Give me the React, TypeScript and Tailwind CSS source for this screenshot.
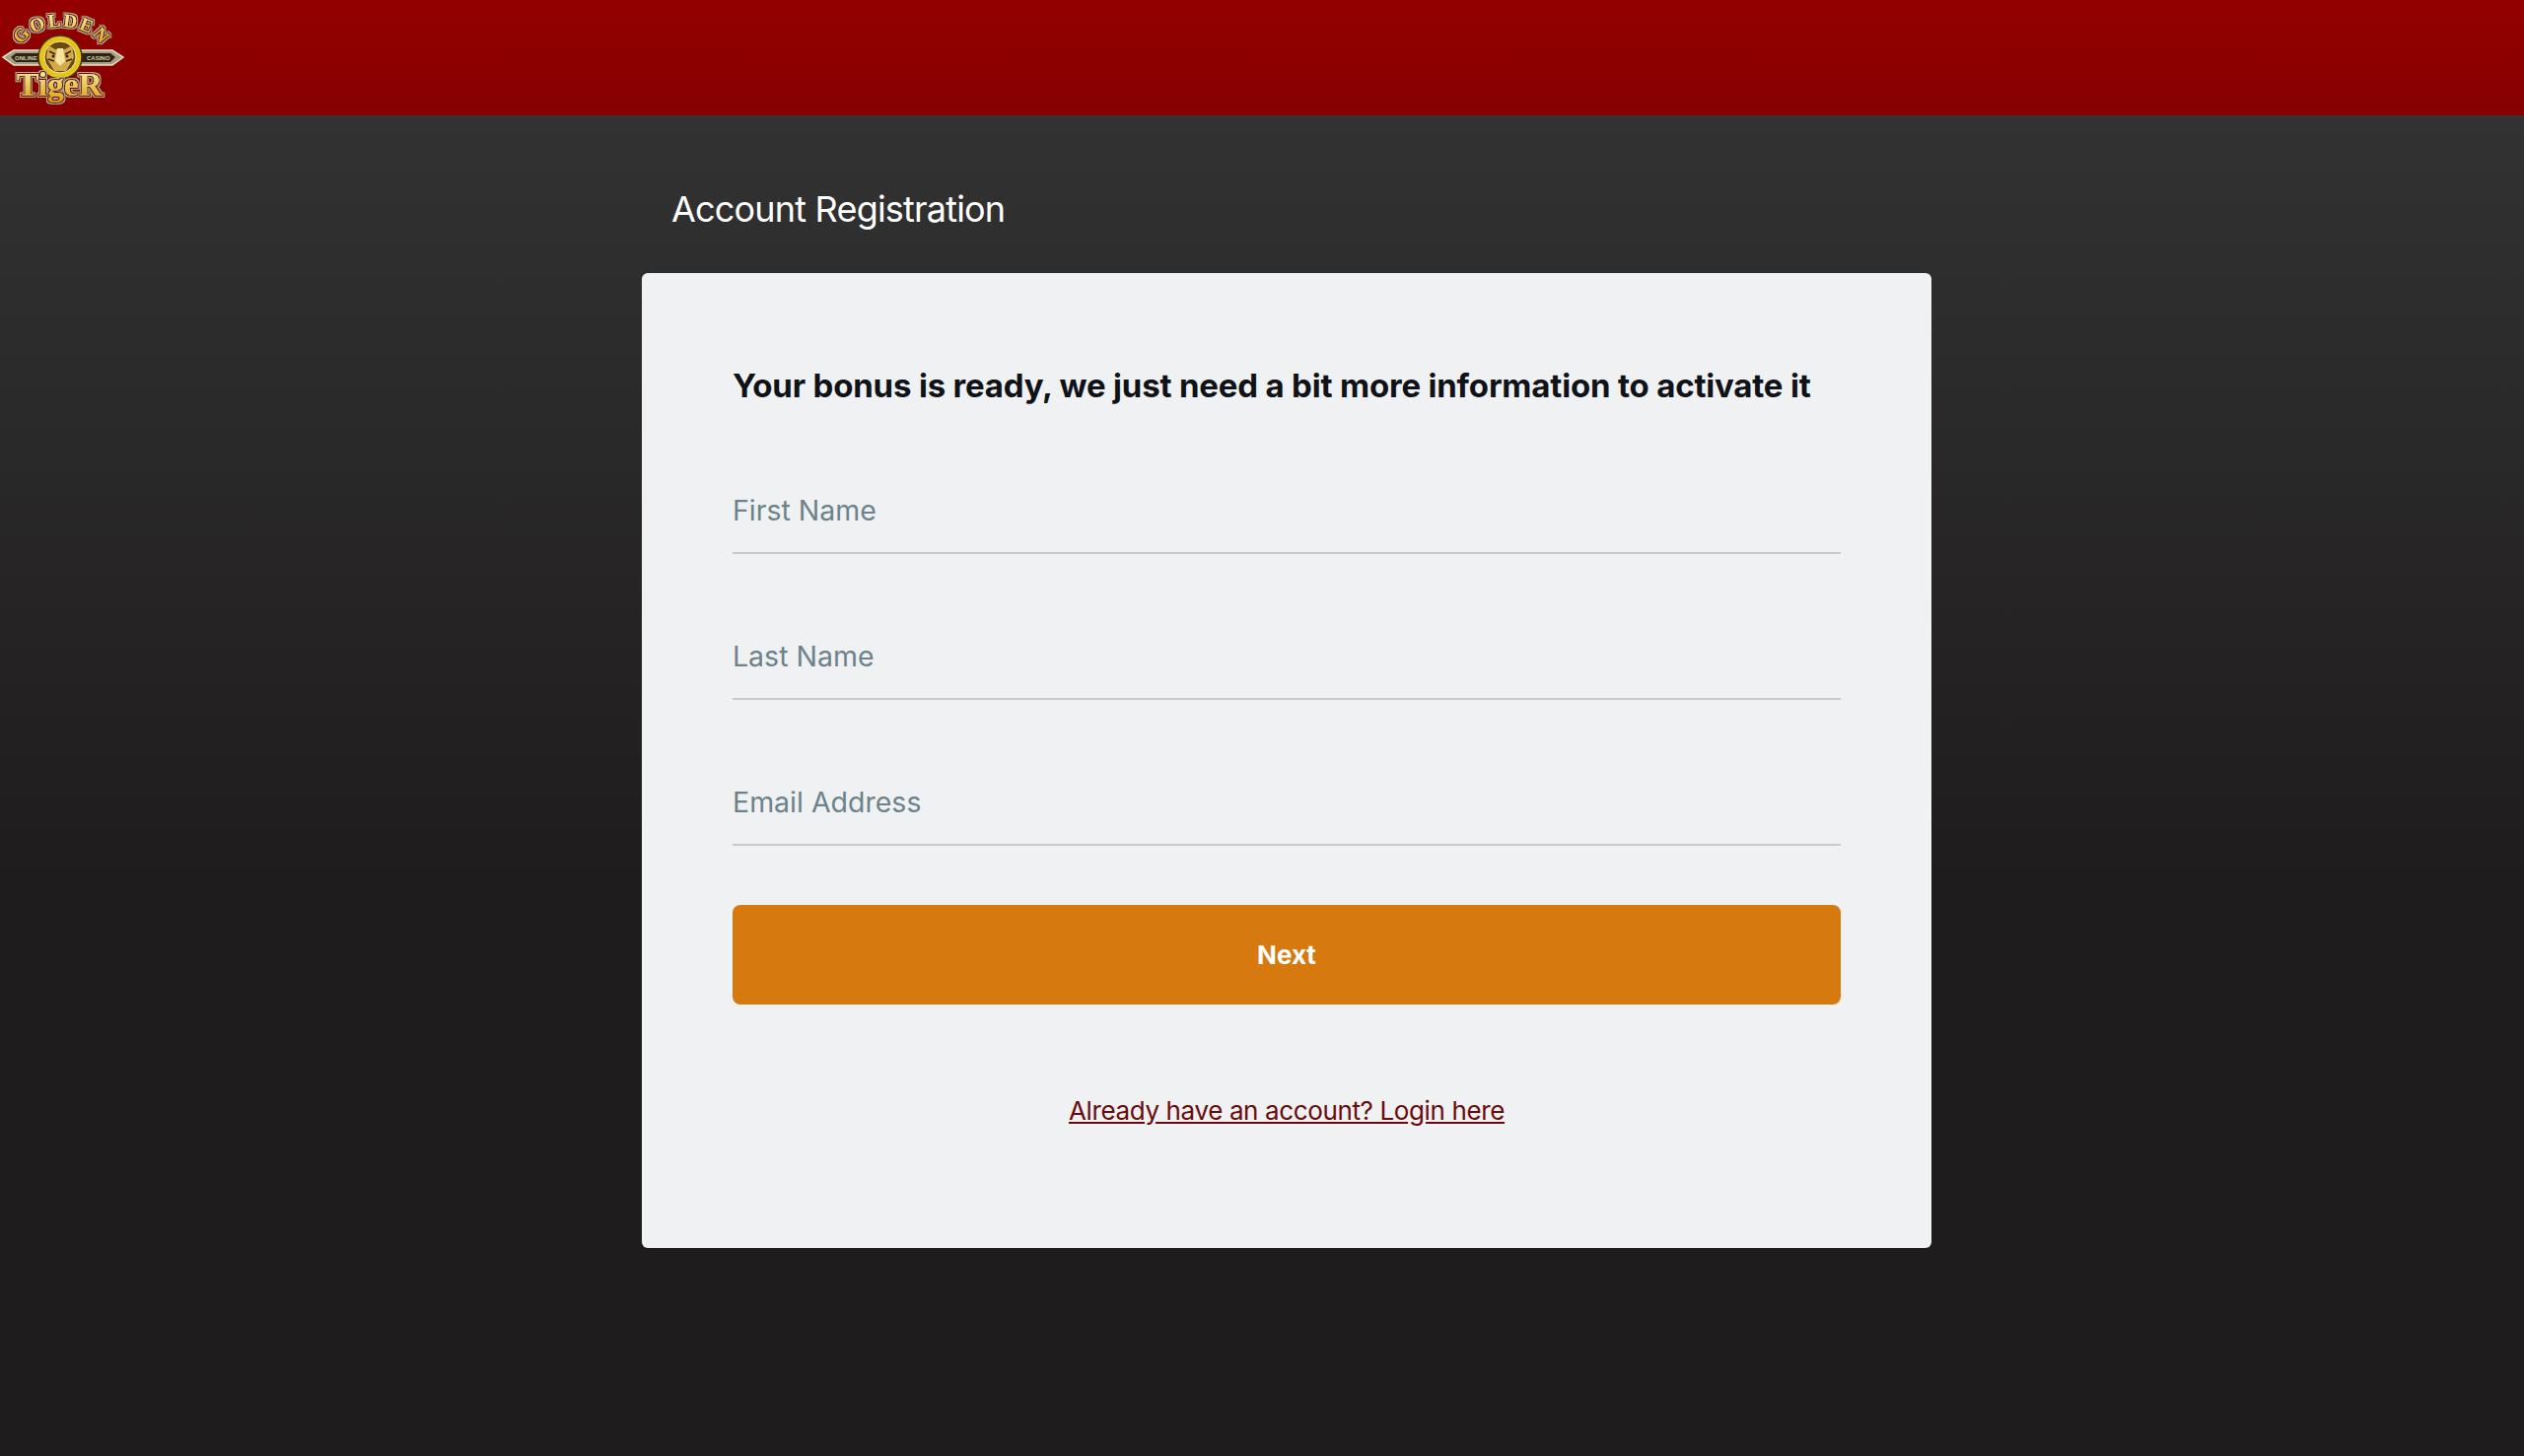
function Logo() {
  return (
    <svg viewBox="0 0 140 117" className="h-[117px] w-[140px] shrink-0">
      <defs>
        <path id="logoArc" d="M22 50 A40 23 0 0 1 102 50" fill="none" />
        <linearGradient id="logoGold" x1="0" y1="0" x2="0" y2="1">
          <stop offset="0" stopColor="#fff7a8" />
          <stop offset="1" stopColor="#e09a10" />
        </linearGradient>
        <filter id="logoEdge" x="-10%" y="-20%" width="120%" height="140%">
          <feMorphology in="SourceAlpha" operator="dilate" radius="1.3" result="inner" />
          <feFlood floodColor="#5c0d06" />
          <feComposite in2="inner" operator="in" result="dark" />
          <feMorphology in="SourceAlpha" operator="dilate" radius="2.4" result="outer" />
          <feFlood floodColor="#b9ab90" />
          <feComposite in2="outer" operator="in" result="light" />
          <feMerge>
            <feMergeNode in="light" />
            <feMergeNode in="dark" />
            <feMergeNode in="SourceGraphic" />
          </feMerge>
        </filter>
      </defs>
      {/* side bar */}
      <path d="M3 58 L14 51 H114 L125 58 L114 66 H14 Z" fill="#a8a084" stroke="#e4dfc4" strokeWidth="1.5" />
      <path d="M11 58 L16 54 H112 L117 58 L112 63 H16 Z" fill="#2e2414" />
      <text x="15" y="60.5" fontSize="6" fontWeight="700" fill="#d8d0a8" fontFamily="Liberation Sans, sans-serif">
        ONLINE
      </text>
      <text x="88" y="60.5" fontSize="6" fontWeight="700" fill="#d8d0a8" fontFamily="Liberation Sans, sans-serif">
        CASINO
      </text>
      {/* GOLDEN */}
      <g filter="url(#logoEdge)">
        <text fontSize="19" fontWeight="700" fill="url(#logoGold)" fontFamily="Liberation Serif, serif">
          <textPath href="#logoArc" startOffset="4" textLength="92" lengthAdjust="spacing">
            GOLDEN
          </textPath>
        </text>
      </g>
      {/* medallion */}
      <circle cx="61" cy="58" r="22" fill="#e4c41c" stroke="#4a3006" strokeWidth="1.5" />
      <circle cx="61" cy="58" r="16" fill="#6b4a12" stroke="#fff0a0" strokeWidth="1" />
      <path d="M49 46 L56 50 H66 L73 46 L75 58 L67 72 H55 L47 58 Z" fill="#d4aa48" />
      <path d="M58 49 H64 L66 62 L61 67 L56 62 Z" fill="#f4e4a0" />
      <path d="M50 52 L56 55 M72 52 L66 55 M49 60 L55 62 M73 60 L67 62" stroke="#3a2406" strokeWidth="1.4" fill="none" />
      <circle cx="54" cy="57" r="1.5" fill="#2c1c04" />
      <circle cx="68" cy="57" r="1.5" fill="#2c1c04" />
      {/* TIGER */}
      <g filter="url(#logoEdge)">
        <text
          x="17"
          y="97"
          fontSize="34"
          fontWeight="700"
          fill="url(#logoGold)"
          textLength="87"
          lengthAdjust="spacingAndGlyphs"
          fontFamily="Liberation Serif, serif"
        >
          TigeR
        </text>
      </g>
    </svg>
  );
}

function Field({ placeholder }: { placeholder: string }) {
  return (
    <div className="mb-[60px] h-[88px] border-b-2 border-[#c6cbce]">
      <input
        placeholder={placeholder}
        className="h-[86px] w-full bg-transparent text-[28.5px] text-[#37474f] outline-none placeholder:text-[#6d8389]"
      />
    </div>
  );
}

export default function App() {
  return (
    <div className="min-h-[1477px] bg-[linear-gradient(180deg,#333233_117px,#1e1c1d_900px)] font-['Inter',sans-serif]">
      <header className="flex h-[117px] bg-[linear-gradient(180deg,#940000,#860000)]">
        <Logo />
      </header>
      <main className="ml-[651px] w-[1308px]">
        <h1 className="flex h-[160px] items-center pl-[30px] pt-[30px] text-[36px] font-normal tracking-[-0.8px] text-white">
          Account Registration
        </h1>
        <div className="h-[989px] rounded-[6px] bg-[#eff1f3] px-[92px] pt-[90px]">
          <h2 className="mb-[59px] h-[48px] text-[33px] leading-[48px] font-bold tracking-[-0.19px] whitespace-nowrap text-[#0f1216]">
            Your bonus is ready, we just need a bit more information to activate it
          </h2>
          <Field placeholder="First Name" />
          <Field placeholder="Last Name" />
          <Field placeholder="Email Address" />
          <button className="h-[101px] w-full rounded-[8px] bg-[#d67a10] text-[26px] font-bold text-white">
            Next
          </button>
          <p className="mt-[88px] text-center text-[26px] leading-[40px] tracking-[-0.37px]">
            <a href="#" className="text-[#6b0a0a] underline">
              Already have an account? Login here
            </a>
          </p>
        </div>
      </main>
    </div>
  );
}
